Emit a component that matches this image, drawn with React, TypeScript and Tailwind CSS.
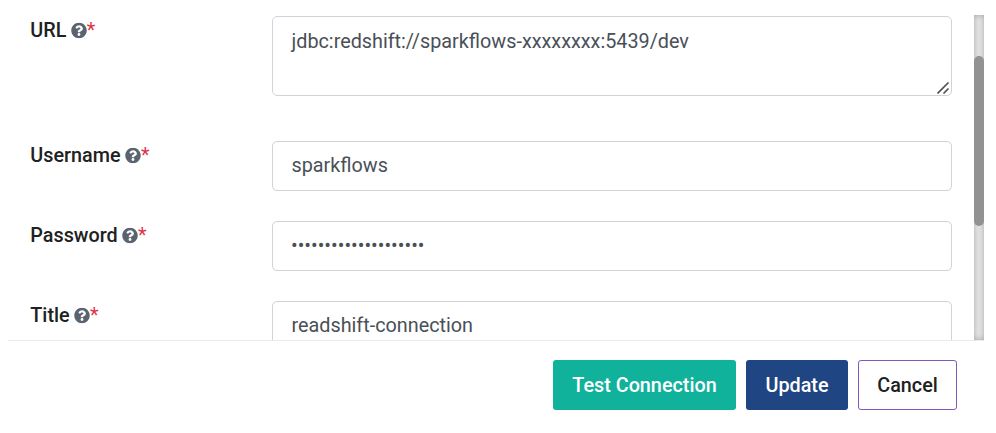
import type { ReactNode } from 'react';
import { FaQuestionCircle } from 'react-icons/fa';

const field =
  'block w-[680px] rounded-[5px] border border-[#ced4da] bg-white pr-[18px] text-[19.8px] text-[#495057] outline-none';

function Row({ label, children, className }: { label: string; children: ReactNode; className: string }) {
  return (
    <div className={`flex items-start ${className}`}>
      <label className="flex w-[242px] shrink-0 items-center pl-[0.3px] text-[19.8px] leading-[30px] font-medium text-[#212121]">
        {label}
        <FaQuestionCircle className="ml-[4.4px] h-4 w-4 -translate-y-[0.5px] text-[#5a6470]" />
        <span className="font-normal text-[#dc3545]">*</span>
      </label>
      {children}
    </div>
  );
}

function Scrollbar() {
  return (
    <div className="ml-[22px] h-[325px] w-[10px] shrink-0 bg-[#e8e8e8] pt-[41px] shadow-[inset_0_0_6px_rgba(0,0,0,0.3)]">
      <div className="h-[170px] rounded-[5px] bg-[#929292]" />
    </div>
  );
}

export default function App() {
  return (
    <div className="h-[433px] w-[996px] overflow-hidden bg-white font-[Roboto,sans-serif]">
      <div className="mr-3 ml-2 flex h-[341px] items-start overflow-hidden border-b border-[#e9ecef] pt-[15px]">
        <div className="w-[944px] shrink-0 pl-[22px]">
          <Row label="URL" className="mb-[45px] pt-px">
            <div className="relative">
              <textarea
                className={`${field} h-20 resize-none pt-[10px] pl-[18.5px] leading-[30px]`}
                defaultValue="jdbc:redshift://sparkflows-xxxxxxxx:5439/dev"
                spellCheck={false}
              />
              <svg
                className="absolute right-[2px] bottom-[2px] h-3 w-[13px]"
                viewBox="0 0 13 12"
                stroke="#505050"
                strokeWidth="1.6"
              >
                <path d="M0.5 11.5 L11.5 0.5 M6.5 11.5 L11.5 6.5" />
              </svg>
            </div>
          </Row>
          <Row label="Username" className="mb-[30px]">
            <input className={`${field} h-[50px] pb-[2px] pl-[18.5px]`} defaultValue="sparkflows" />
          </Row>
          <Row label="Password" className="mb-[30px]">
            <input type="password" className={`${field} h-[50px] pb-[2px] pl-[18px]`} defaultValue="abcdefghijklmnopqrst" />
          </Row>
          <Row label="Title" className="">
            <input className={`${field} h-[50px] pb-[2px] pl-[18.5px]`} defaultValue="readshift-connection" />
          </Row>
        </div>
        <Scrollbar />
      </div>
      <div className="flex justify-end gap-[10px] pt-[19px] pr-[39px] text-[19.8px] font-medium">
        <button className="h-[50px] w-[183px] rounded-[3px] bg-[#10b29b] pt-[2px] text-white">Test Connection</button>
        <button className="h-[50px] w-[102px] rounded-[3px] bg-[#1f4582] pt-[2px] text-white">Update</button>
        <button className="h-[50px] w-[99px] rounded-[3px] border border-[#7e57c2] bg-white pt-[2px] text-[#212121]">Cancel</button>
      </div>
    </div>
  );
}
